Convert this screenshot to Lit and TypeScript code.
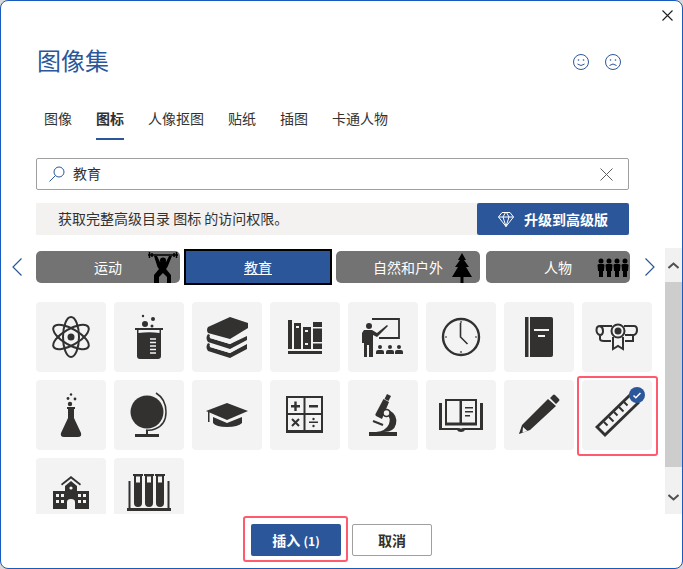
import {LitElement, css, html, svg} from 'lit';
import {customElement, state} from 'lit/decorators.js';

const INK = '#323130';
const TILE = '#f3f3f3';

// icons are drawn on the 70x70 tile
const ICONS = [
  svg`<g fill="none" stroke="${INK}" stroke-width="2"><ellipse cx="35" cy="35" rx="20" ry="8" transform="rotate(90 35 35)"/><ellipse cx="35" cy="35" rx="20" ry="8" transform="rotate(30 35 35)"/><ellipse cx="35" cy="35" rx="20" ry="8" transform="rotate(150 35 35)"/></g><circle cx="35" cy="35" r="3.5" fill="${INK}"/>`,
  svg`<path d="M21 26h28v2h-2v26a3 3 0 0 1-3 3H26a3 3 0 0 1-3-3V28h-2z" fill="${INK}"/><path d="M24.500 28h21v3q-10-1.500-21 0z" fill="${TILE}"/><path d="M36 37h6M36 40.500h6M36 44h6M36 47.500h6M36 51h6" stroke="${TILE}" stroke-width="1.300"/><circle cx="31" cy="22" r="3" fill="${INK}"/><circle cx="39" cy="17" r="2" fill="${INK}"/><circle cx="29" cy="14" r="1.200" fill="${INK}"/><circle cx="38" cy="24" r="1.500" fill="${INK}"/>`,
  svg`<path d="M16 25l22-10 18 6v5L38 37l-22-6q-2-3 0-6z" fill="${INK}"/><path d="M16 32q-3 4 0 8l22 7 17-9v-4L38 42l-20-6q-1-2 0-3z" fill="${INK}"/><path d="M16 41q-3 4 0 8l22 7 17-9v-5L38 51l-20-6q-1-2 0-3z" fill="${INK}"/><path d="M18 33l20 6 16-8v2L38 42l-20-6zM18 42l20 6 16-8v2L38 51l-20-6z" fill="${TILE}"/>`,
  svg`<path d="M18 18h4v29h-4zM24 21h7v26h-7zM33 25h8v22h-8zM43 20h9v27h-9zM18 49h34v3H18z" fill="${INK}"/><path d="M26 24h3v2h-3zM35 28h3v2h-3zM35 41h3v2h-3zM43 25h9v1.500h-9zM43 40h9v1.500h-9z" fill="${TILE}"/>`,
  svg`<path d="M24 17h27v19H31" fill="none" stroke="${INK}" stroke-width="1.800"/><circle cx="21" cy="24" r="3" fill="${INK}"/><path d="M16 28h8l5 3 10-8 1 1-11 11-4-2v22h-4V43h-2v12h-3V41h-2V31z" fill="${INK}"/><circle cx="32" cy="45" r="2" fill="${INK}"/><circle cx="42" cy="45" r="2" fill="${INK}"/><circle cx="51" cy="45" r="2" fill="${INK}"/><path d="M28 52v-2q0-2 2-2h4q2 0 2 2v2zM38 52v-2q0-2 2-2h4q2 0 2 2v2zM47 52v-2q0-2 2-2h4q2 0 2 2v2z" fill="${INK}"/>`,
  svg`<circle cx="35" cy="35" r="18" fill="none" stroke="${INK}" stroke-width="2.400"/><path d="M34.500 21v14l7 7" fill="none" stroke="${INK}" stroke-width="1.600"/><path d="M35 19v2M35 49v2M19 35h2M49 35h2" stroke="${INK}" stroke-width="1.200"/>`,
  svg`<path d="M21 15h3.500v40H21z" fill="${INK}"/><path d="M26 15h21a2 2 0 0 1 2 2v36a2 2 0 0 1-2 2H26z" fill="${INK}"/><path d="M30 27h15v2H30zM34 33h7v2h-7z" fill="${TILE}"/>`,
  svg`<g fill="none" stroke="${INK}" stroke-width="2"><path d="M30 24H18q-3.500 0-3.500 4t3.500 5q3 0 3-4t-3-5M18 33v4q0 2 4 2h7M42 24h10q3 0 3 4t-3 5h-9M51 33v6H43"/><circle cx="36" cy="29" r="6.500"/><path d="M31 35v12l5-3 5 3V35"/></g><circle cx="36" cy="29" r="3.500" fill="${INK}"/>`,
  svg`<path d="M31 27h8v2h-1v9l7 15q1 4-3 4H28q-4 0-3-4l7-15v-9h-1z" fill="${INK}"/><circle cx="34" cy="24" r="2.200" fill="${INK}"/><circle cx="32" cy="18.500" r="1.400" fill="${INK}"/><circle cx="39" cy="19" r="1.400" fill="${INK}"/><circle cx="35" cy="14.500" r="1.200" fill="${INK}"/>`,
  svg`<circle cx="33" cy="32" r="16.500" fill="${INK}"/><path d="M42 13q10 6 10 19t-11 17q-5 2-9 1" fill="none" stroke="${INK}" stroke-width="1.500"/><path d="M32 50h2v4h-2zM21 54h24v3H21z" fill="${INK}"/>`,
  svg`<path d="M35 23l21 8-21 9-21-9z" fill="${INK}"/><path d="M21 37l14 6 15-6v6q-4 4-15 4t-14-4z" fill="${INK}"/><path d="M16 32h1.500v10H16z" fill="${INK}"/>`,
  svg`<path d="M16 16h37v37H16z" fill="${INK}"/><path d="M18 18h15.500v15H18zM35.500 18H51v15H35.500zM18 35h15.500v15H18zM35.500 35H51v15H35.500z" fill="${TILE}"/><path d="M21 25h9v2.400h-9zM24.300 21.500h2.400v9.500h-2.400zM39 25h9v2.400h-9zM39 41.500h9v1.500h-9z" fill="${INK}"/><path d="M22 39l7 7M29 39l-7 7" stroke="${INK}" stroke-width="2"/><circle cx="43.500" cy="39" r="1.200" fill="${INK}"/><circle cx="43.500" cy="46" r="1.200" fill="${INK}"/>`,
  svg`<path d="M21 52h28v4H21z" fill="${INK}"/><path d="M39 14l4 2-2.500 5-4-2z" fill="${INK}"/><path d="M35.500 19l5.500 3-7 17-6-3q-1-1-.5-2z" fill="${INK}"/><path d="M41 30q9 5 7 14-2 8-12 8h-8q10-1 13-8 2-6-2-10z" fill="${INK}"/><circle cx="38.500" cy="33" r="3.500" fill="${TILE}" stroke="${INK}" stroke-width="1.600"/><path d="M25 41l10 4" stroke="${INK}" stroke-width="2"/>`,
  svg`<path d="M13 23h3v25h16q3 0 3 1 0-1 3-1h16V23h3v27H39q-1 2-4 2t-4-2H13z" fill="${INK}"/><path d="M19 19h32v26.500H19z" fill="${INK}"/><path d="M21 21h12.500v21.500H21zM36 21h13v21.500H36z" fill="${TILE}"/><path d="M39 27h8v1.600h-8zM39 31h8v1.600h-8zM39 35h5v1.600h-5z" fill="${INK}"/>`,
  svg`<path d="M46 18l3-3q1-1 2 0l4 4q1 1 0 2l-3 3zM44 19l8 7-26 24-11 4 3-9z" fill="${INK}"/><path d="M19 47l4.500 4-5 1.500z" fill="${TILE}"/><path d="M16.500 50.500l1.500 1.500-2.500 1.500z" fill="${INK}"/>`,
  svg`<path d="M13 47l35-34 10 10-35 34z" fill="${INK}"/><path d="M17 47l31-30 6 6-31 30z" fill="${TILE}"/><path d="M22 42l3.500 3.500M27 37l4.500 4.500M32 32l3.500 3.500M37 27l4.500 4.500M42 22l3.500 3.500" stroke="${INK}" stroke-width="2"/>`,
  svg`<path d="M35 18l10 8-1 1.500-9-7-9 7-1-1.500z" fill="${INK}"/><path d="M29 28l6-5 6 5v5h12v18H39v-7q0-3-4-3t-4 3v7H17V33h12z" fill="${INK}"/><path d="M20 36h3v3h-3zM25 36h3v3h-3zM20 42h3v3h-3zM25 42h3v3h-3zM42 36h3v3h-3zM47 36h3v3h-3zM42 42h3v3h-3zM47 42h3v3h-3z" fill="${TILE}"/><circle cx="35" cy="30" r="1.600" fill="${TILE}"/>`,
  svg`<path d="M13 50h44v3H13zM14.500 23h2v27h-2zM53.500 23h2v27h-2z" fill="${INK}"/><path d="M19 16h10v2h-1v27a4 4 0 0 1-8 0V18h-1zM30 16h10v2h-1v27a4 4 0 0 1-8 0V18h-1zM41 16h10v2h-1v27a4 4 0 0 1-8 0V18h-1z" fill="${INK}"/><path d="M22 18.500h4v6h-4zM33 18.500h4v6h-4zM44 18.500h4v6h-4z" fill="${TILE}"/>`,
];

const CATEGORIES = [
  {
    label: '运动',
    icon: html`<svg class="cat-icon lifter" viewBox="0 0 32 32"><path d="M1 4h30M2.500 1v6M5 2v4M27 2v4M29.500 1v6" stroke="#000" stroke-width="1.500" fill="none"/><circle cx="16" cy="9.500" r="3"/><path d="M7 5h3l3 6h6l3-6h3l-4.500 11-1.500 2 5 6v8h-4v-6l-4-4-4 4v6H7v-8l5-6-1.500-2z"/></svg>`,
  },
  {label: '教育', selected: true},
  {
    label: '自然和户外',
    icon: html`<svg class="cat-icon tree" viewBox="0 0 22 30"><path d="M11 0l4 7h-2l5 7h-3l6 10h-8.500v6h-3v-6H1l6-10H4l5-7H7z"/></svg>`,
  },
  {
    label: '人物',
    icon: html`<svg class="cat-icon folk" viewBox="0 0 32 19"><circle cx="4" cy="3" r="2.500"/><path d="M.5 7q0-1 2-1h3q2 0 2 1l-.5 6H6v6H2v-6H1z"/><circle cx="12" cy="3" r="2.500"/><path d="M8.500 7q0-1 2-1h3q2 0 2 1l-.5 6h-1v6h-4v-6H9z"/><circle cx="20" cy="3" r="2.500"/><path d="M16.500 7q0-1 2-1h3q2 0 2 1l-.5 6h-1v6h-4v-6h-1z"/><circle cx="28" cy="3" r="2.500"/><path d="M24.500 7q0-1 2-1h3q2 0 2 1l-.5 6h-1v6h-4v-6h-1z"/></svg>`,
  },
];

@customElement('app-root')
export class AppRoot extends LitElement {
  static override styles = css`
    :host {
      display: block;
      width: 683px;
      height: 569px;
      background: #d9d9d9;
      font-family: 'Noto Sans CJK SC', 'Liberation Sans', sans-serif;
      font-size: 14px;
      color: #323130;
    }
    .dialog {
      position: relative;
      box-sizing: border-box;
      display: flex;
      flex-direction: column;
      height: 569px;
      background: #fff;
      border: 1px solid #185abd;
      border-radius: 8px;
      overflow: hidden;
    }
    .close {
      position: absolute;
      top: 9px;
      right: 9px;
      width: 11px;
      height: 11px;
    }
    .top {
      padding: 43px 0 0 35px;
      width: 593px;
      flex: none;
    }
    .title-row {
      display: flex;
      justify-content: space-between;
      align-items: center;
      height: 32px;
    }
    h1 {
      margin: 0 0 0 1px;
      font-size: 24px;
      font-weight: 400;
      line-height: 32px;
      color: #2b579a;
    }
    .faces {
      display: flex;
      gap: 16px;
      margin: 4px 8px 0 0;
    }
    .faces svg {
      display: block;
      width: 16px;
      height: 16px;
    }
    .tabs {
      display: flex;
      gap: 24px;
      margin: 30px 0 18px 8px;
    }
    .tab {
      box-sizing: border-box;
      height: 34px;
      line-height: 24px;
      border-bottom: 2px solid transparent;
    }
    .tab.on {
      font-weight: 700;
      border-bottom-color: #2b579a;
    }
    .search {
      box-sizing: border-box;
      display: flex;
      align-items: center;
      height: 32px;
      padding: 0 15px 0 12px;
      border: 1px solid #a19f9d;
      border-radius: 2px;
    }
    .search svg {
      display: block;
      flex: none;
    }
    .search span {
      flex: 1;
      margin-left: 8px;
      line-height: 28px;
      padding-bottom: 2px;
    }
    .banner {
      display: flex;
      justify-content: space-between;
      height: 32px;
      margin-top: 13px;
      padding-left: 22px;
      line-height: 30px;
      background: #f3f2f1;
    }
    .upgrade {
      display: flex;
      align-items: center;
      gap: 10px;
      box-sizing: border-box;
      width: 152px;
      height: 32px;
      padding-left: 21px;
      background: #2b579a;
      border-radius: 2px;
      color: #fff;
      font-weight: 700;
    }
    .body {
      display: flex;
      flex: none;
      height: 266px;
      margin-top: 13px;
    }
    .content {
      flex: 1;
      min-width: 0;
      overflow: hidden;
      padding-top: 3px;
    }
    .cats {
      position: relative;
      display: flex;
      gap: 6px;
      width: 594px;
      margin-left: 35px;
    }
    .cat {
      position: relative;
      flex: none;
      width: 144px;
      height: 32px;
      box-sizing: border-box;
      overflow: hidden;
      border-radius: 5px;
      background: #737373;
      color: #fff;
      line-height: 32px;
      text-align: center;
    }
    .cat.on {
      overflow: visible;
      border-radius: 0;
      background: #2b579a;
      outline: 2px solid #000;
      text-decoration: underline;
    }
    .cat-icon {
      position: absolute;
      display: block;
      fill: #000;
    }
    .lifter {
      right: 1px;
      bottom: 0;
      width: 32px;
      height: 32px;
    }
    .tree {
      right: 7px;
      bottom: 0;
      width: 22px;
      height: 30px;
    }
    .folk {
      right: 1px;
      top: 7px;
      width: 32px;
      height: 19px;
    }
    .chev {
      position: absolute;
      top: 7px;
      width: 10px;
      height: 18px;
    }
    .chev.prev {
      left: -24px;
    }
    .chev.next {
      right: -25px;
    }
    .grid {
      display: grid;
      grid-template-columns: repeat(8, 70px);
      grid-auto-rows: 70px;
      gap: 8px;
      margin: 19px 0 0 35px;
    }
    .tile {
      position: relative;
      border-radius: 4px;
      background: #f3f3f3;
    }
    .art {
      display: block;
      width: 70px;
      height: 70px;
    }
    .tile.picked::after {
      content: '';
      position: absolute;
      inset: -4px -6px -6px -5px;
      border: 2px solid #ff5a6e;
      border-radius: 3px;
    }
    .badge {
      position: absolute;
      top: 7px;
      right: 7px;
      width: 16px;
      height: 16px;
    }
    .scrollbar {
      flex: none;
      display: flex;
      flex-direction: column;
      width: 17px;
      background: #f1f1f1;
    }
    .arrow {
      flex: none;
      height: 34px;
      display: flex;
      align-items: center;
      justify-content: center;
    }
    .thumb {
      flex: none;
      height: 185px;
      background: #cdcdcd;
    }
    .space {
      flex: 1;
    }
    .footer {
      display: flex;
      justify-content: center;
      gap: 11px;
      padding-top: 10px;
    }
    button {
      box-sizing: border-box;
      position: relative;
      height: 32px;
      padding: 0;
      border-radius: 2px;
      font: inherit;
      font-weight: 700;
    }
    .primary {
      width: 90px;
      background: #2b579a;
      border: 0;
      color: #fff;
    }
    .primary::after {
      content: '';
      position: absolute;
      inset: -8px -7px -6px -8px;
      border: 2px solid #ff5a6e;
      border-radius: 3px;
    }
    .count {
      font-size: 12px;
    }
    .ghost {
      width: 80px;
      background: #fff;
      border: 1px solid #a19f9d;
      color: #323130;
    }
  `;

  @state()
  picked = 15;

  private tabs = ['图像', '图标', '人像抠图', '贴纸', '插图', '卡通人物'];

  private renderFace(mouth: string) {
    return html`<svg viewBox="0 0 16 16" fill="none" stroke="#2b579a">
      <circle cx="8" cy="8" r="7.500" />
      <circle cx="5.500" cy="6" r=".8" fill="#2b579a" stroke="none" />
      <circle cx="10.500" cy="6" r=".8" fill="#2b579a" stroke="none" />
      <path d="${mouth}" />
    </svg>`;
  }

  override render() {
    return html`
      <div class="dialog">
        <svg class="close" viewBox="0 0 11 11" stroke="#201f1e" stroke-width="1.100">
          <path d="M.5.500l10 10M10.500.500l-10 10" />
        </svg>
        <div class="top">
          <div class="title-row">
            <h1>图像集</h1>
            <div class="faces">
              ${this.renderFace('M4.500 10q3.500 3 7 0')}
              ${this.renderFace('M4.500 11.500q3.500-3 7 0')}
            </div>
          </div>
          <div class="tabs">
            ${this.tabs.map((t, i) => html`<div class="tab ${i === 1 ? 'on' : ''}">${t}</div>`)}
          </div>
          <div class="search">
            <svg width="16" height="16" viewBox="0 0 16 16" fill="none" stroke="#2b579a">
              <circle cx="10" cy="6" r="5" />
              <path d="M6.500 9.500L.5 15.500" />
            </svg>
            <span>教育</span>
            <svg width="13" height="13" viewBox="0 0 13 13" stroke="#605e5c">
              <path d="M.5.500l12 12M12.500.500l-12 12" />
            </svg>
          </div>
          <div class="banner">
            <span>获取完整高级目录 图标 的访问权限。</span>
            <div class="upgrade">
              <svg width="16" height="15" viewBox="0 0 16 15" fill="none" stroke="#fff">
                <path d="M4 .5h8l3.500 4.500L8 14.500.5 5zM.5 5h15M5 5l3 9.500L11 5 8.500.5h-1z" />
              </svg>
              <span>升级到高级版</span>
            </div>
          </div>
        </div>
        <div class="body">
          <div class="content">
            <div class="cats">
              <svg class="chev prev" viewBox="0 0 10 18" fill="none" stroke="#2b579a" stroke-width="1.200">
                <path d="M9.500.5L1 9l8.500 8.500" />
              </svg>
              ${CATEGORIES.map(
                (c) => html`<div class="cat ${c.selected ? 'on' : ''}">${c.label}${c.icon ?? ''}</div>`
              )}
              <svg class="chev next" viewBox="0 0 10 18" fill="none" stroke="#2b579a" stroke-width="1.200">
                <path d="M.5.5L9 9 .5 17.500" />
              </svg>
            </div>
            <div class="grid">
              ${ICONS.map(
                (icon, i) => html`<div class="tile ${i === this.picked ? 'picked' : ''}">
                  <svg class="art" viewBox="0 0 70 70">${icon}</svg>
                  ${i === this.picked
                    ? html`<svg class="badge" viewBox="0 0 16 16">
                        <circle cx="8" cy="8" r="8" fill="#2b579a" />
                        <path d="M4.500 8.500l2.300 2.200 4.700-4.700" fill="none" stroke="#fff" stroke-width="1.500" />
                      </svg>`
                    : ''}
                </div>`
              )}
            </div>
          </div>
          <div class="scrollbar">
            <div class="arrow">
              <svg width="11" height="7" viewBox="0 0 11 7" fill="none" stroke="#505050" stroke-width="2">
                <path d="M.5 6l5-4.500 5 4.500" />
              </svg>
            </div>
            <div class="thumb"></div>
            <div class="space"></div>
            <div class="arrow">
              <svg width="11" height="7" viewBox="0 0 11 7" fill="none" stroke="#505050" stroke-width="2">
                <path d="M.5 1l5 4.500 5-4.500" />
              </svg>
            </div>
          </div>
        </div>
        <div class="footer">
          <button class="primary">插入 <span class="count">(1)</span></button>
          <button class="ghost">取消</button>
        </div>
      </div>
    `;
  }
}

declare global {
  interface HTMLElementTagNameMap {
    'app-root': AppRoot;
  }
}
